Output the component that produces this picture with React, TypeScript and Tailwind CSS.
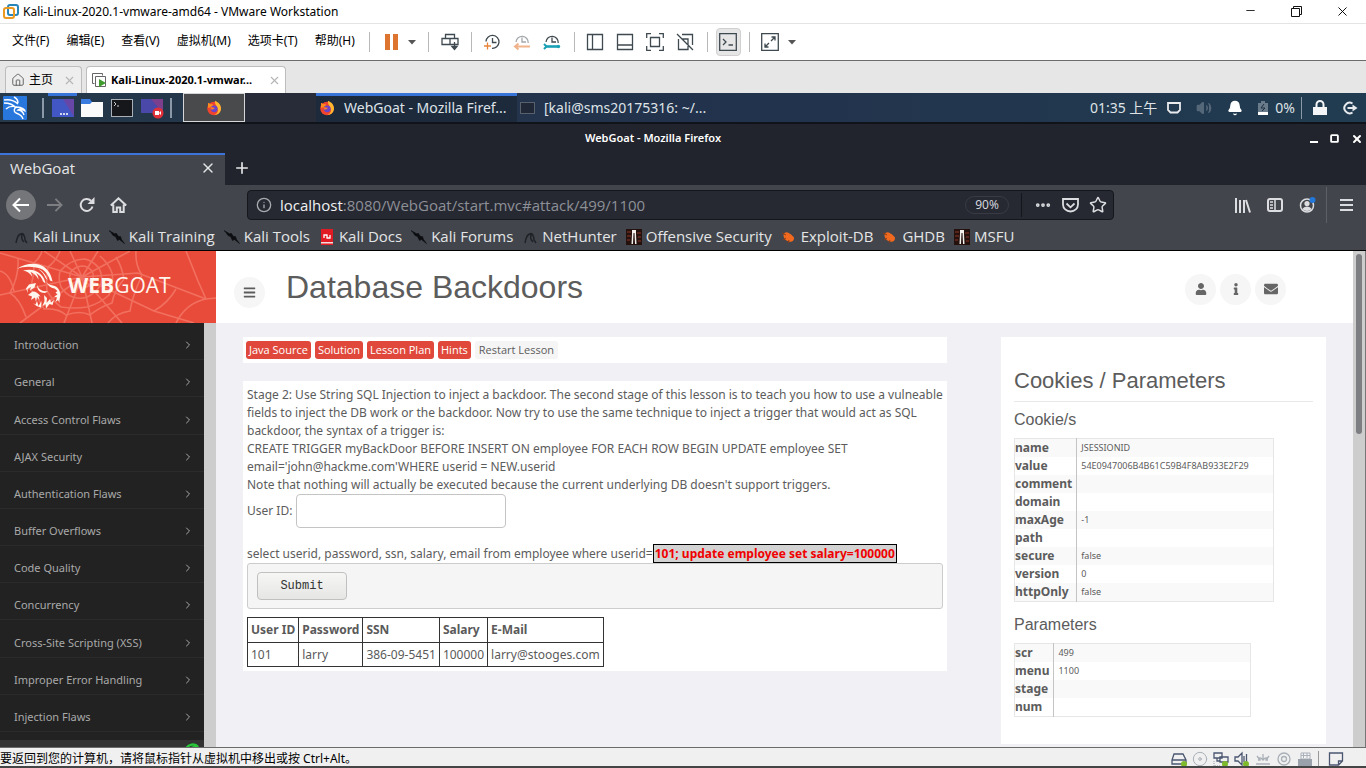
import React, { useState } from "react";
import {
  Bell,
  ChevronRight,
  Disc,
  Home,
  Info,
  Minus,
  MoreHorizontal,
  Plus,
  Square,
  Star,
  Volume2,
  X,
} from "lucide-react";
import { FaBars, FaEnvelope, FaInfo, FaUser } from "react-icons/fa";

interface LessonRow {
  name: string;
  value: string;
}

const menus = ["文件(F)", "编辑(E)", "查看(V)", "虚拟机(M)", "选项卡(T)", "帮助(H)"];

const bookmarks = [
  { label: "Kali Linux", icon: "dragon" },
  { label: "Kali Training", icon: "blade" },
  { label: "Kali Tools", icon: "blade" },
  { label: "Kali Docs", icon: "docs" },
  { label: "Kali Forums", icon: "blade" },
  { label: "NetHunter", icon: "dragon" },
  { label: "Offensive Security", icon: "tower" },
  { label: "Exploit-DB", icon: "bug" },
  { label: "GHDB", icon: "bug" },
  { label: "MSFU", icon: "tower" },
];

const lessons = [
  "Introduction",
  "General",
  "Access Control Flaws",
  "AJAX Security",
  "Authentication Flaws",
  "Buffer Overflows",
  "Code Quality",
  "Concurrency",
  "Cross-Site Scripting (XSS)",
  "Improper Error Handling",
  "Injection Flaws",
];

const cookies: LessonRow[] = [
  { name: "name", value: "JSESSIONID" },
  { name: "value", value: "54E0947006B4B61C59B4F8AB933E2F29" },
  { name: "comment", value: "" },
  { name: "domain", value: "" },
  { name: "maxAge", value: "-1" },
  { name: "path", value: "" },
  { name: "secure", value: "false" },
  { name: "version", value: "0" },
  { name: "httpOnly", value: "false" },
];

const parameters: LessonRow[] = [
  { name: "scr", value: "499" },
  { name: "menu", value: "1100" },
  { name: "stage", value: "" },
  { name: "num", value: "" },
];

const Divider = () => <span className="h-5 w-px shrink-0 bg-[#b8b8b8]" />;

const Caret = () => (
  <svg width="8" height="5" viewBox="0 0 8 5" className="shrink-0">
    <path d="M0 0h8L4 4.5z" fill="#555" />
  </svg>
);

const FirefoxIcon = () => (
  <svg width="16" height="16" viewBox="0 0 16 16" className="shrink-0">
    <circle cx="8" cy="8.5" r="6.8" fill="#f0442e" />
    <path d="M9 .8c3.8 1.6 6.3 4.6 6 8.2-.4 3.6-3 5.8-6.5 5.8 3-1 4-3.6 3.2-6C11 6 8.5 4.5 9 .8z" fill="#ffb52e" />
    <path d="M2 3c.9.1 1.7.5 2.3 1.2 1.2-.3 2.300 0 3 .8L5 7l-3 1z" fill="#ff8a1f" />
    <circle cx="8.2" cy="8.8" r="3.4" fill="#6a45c9" />
    <path d="M4.5 7.5c1.5-.7 3-.2 4.3.5-.8 1.3-2.200 1.6-3.6 1.5z" fill="#ff7a22" />
  </svg>
);

const ToolIcon = ({ name }: { name: string }) => {
  const line = { fill: "none", stroke: "#3f4a50", strokeWidth: 1.3 };
  return (
    <svg width="18" height="18" viewBox="0 0 18 18" className="shrink-0">
      {name === "send" && (
        <g {...line}>
          <path d="M4.5 5.500V1.500h9v4M1 5.500h16v6H1zM9 5.500v6" />
          <path d="M13.500 9v7M11 13.500l2.500 3 2.500-3z" fill="#3f4a50" />
        </g>
      )}
      {name === "snapshot" && (
        <g {...line}>
          <path d="M3 8.500a6.500 6.500 0 1 1 6 6.900M9.500 5v4.500h4" />
          <path d="M1 13h7M4.500 9.500v7" stroke="#e8853b" />
        </g>
      )}
      {name === "revert" && (
        <g {...line} stroke="#a3a8ab">
          <path d="M3 9a6 6 0 1 1 12.200 1M9 4.500V9h4" />
          <path d="M3 13.500h14M5.500 10.500l-3.500 3 3.500 3" stroke="#f0b48c" strokeWidth="2" />
        </g>
      )}
      {name === "manage" && (
        <g {...line}>
          <path d="M3 9a6 6 0 1 1 12.200 1M9 4.500V9h4" />
          <path d="M3 13.500h12.500" stroke="#19a0b5" strokeWidth="2.600" />
          <path d="M1 11l2.500 2.500L1 16" stroke="#19a0b5" strokeWidth="2" />
          <circle cx="15.500" cy="13.500" r="1.700" fill="#19a0b5" stroke="none" />
        </g>
      )}
      {name === "sidebar" && <path {...line} d="M1.500 1.500h15v15h-15zM6.500 1.500v15" />}
      {name === "bottom" && <path {...line} d="M1.500 1.500h15v15h-15zM1.500 12h15" />}
      {name === "fullscreen" && (
        <path {...line} d="M.7 5V.7H5M13 .7h4.300V5M17.300 13v4.300H13M5 17.300H.7V13M4.500 4.500h9v9h-9z" />
      )}
      {name === "unity" && (
        <path {...line} d="M6 1.500h10.500V12M2.500 6v10.500H12V13M6 6h6v6M1 1l16 16" />
      )}
      {name === "console" && (
        <path {...line} d="M.7.7h16.600v16.600H.7zM4 6l3 3-3 3M9.500 12h4.500" />
      )}
      {name === "stretch" && (
        <path {...line} d="M.7.7h16.600v16.600H.7zM10 8l4-4M10.500 4H14v3.500M8 10l-4 4M4 10.500V14h3.500" />
      )}
    </svg>
  );
};

const ToolButton = ({ name, label }: { name: string; label: string }) => (
  <button
    aria-label={label}
    className={
      name === "console"
        ? "mx-2 flex h-7 w-[25px] items-center justify-center rounded-sm border border-[#d0d0d0] bg-[#e6e6e6]"
        : "flex h-7 w-[30px] items-center justify-center"
    }
  >
    <ToolIcon name={name} />
  </button>
);

const BookmarkIcon = ({ name }: { name: string }) => (
  <svg width="16" height="16" viewBox="0 0 16 16" className="shrink-0">
    {name === "dragon" && (
      <path d="M3 14c1-4 1-8 5-9 3 0 4 3 4 6l2 3M5 7c2-3 5-3 6-1M9 6c-1 3 0 5 2 7" fill="none" stroke="#1f2328" strokeWidth="1.500" />
    )}
    {name === "blade" && (
      <path d="M0 1.500l6 3.500 1-1 2.500 3.500h2l1 3 3 4-5-4-2 1-2-4-2.500-1-2-3z" fill="#0b0d10" stroke="#0b0d10" strokeWidth=".6" />
    )}
    {name === "docs" && (
      <g>
        <path d="M2 0h12v16H2z" fill="#e01b24" />
        <path d="M2 13h12v1.500H2z" fill="#f3dede" />
        <path d="M5 9V6h3v3h3V6" fill="none" stroke="#fff" strokeWidth="1.300" />
      </g>
    )}
    {name === "tower" && (
      <g>
        <path d="M0 0h16v16H0z" fill="#24100c" />
        <path d="M1 3h4M1 7h4M1 11h3M11 4h4M12 8h3M12 12h3" stroke="#6a2a1c" strokeWidth="1.500" />
        <path d="M6 1h4v4l.5 10H9L8.500 4h-1L7 15H5.500L6 5z" fill="#f3f0ec" />
      </g>
    )}
    {name === "bug" && (
      <g>
        <path d="M2.500 6c1-3 3-3.500 6-1.500 2 1 3 2 4.500 4 .5 3-2 5-5 4-4-1-5.500-4-5.500-6.500z" fill="#f0691e" />
        <path d="M1 4l4 2M2 11l3-2M7 14l1-3" stroke="#8f3c14" />
      </g>
    )}
  </svg>
);

const WebBackground = () => (
  <svg
    viewBox="0 0 216 72"
    preserveAspectRatio="xMinYMin slice"
    className="absolute inset-0 h-full w-full"
  >
    <g fill="none" stroke="#f2705f" strokeWidth="1.600">
      <path d="M82 26L0 2M82 26L0 44M82 26L20 72M82 26l-18 46M82 26l10 46M82 26l40 46M82 26l72 34 40 12M82 26l56-4 68 26M82 26l48-26M82 26L98 0M82 26L70 0M82 26L44 0" />
      <path d="M70 22q-1 5 1 9 3 5 10 6 7 0 10-5 4-6 1-12-4-5-10-5-8 1-12 7z" />
      <path d="M60 20q-2 8 1 16 5 8 12 10 10 3 16-1 8-4 12-12 2-8-2-16-6-7-14-9-14 0-25 12z" />
      <path d="M48 16q-2 11-1 24 6 10 14 16 14 2 26 0 12-3 22-12 5-12 3-22-3-9-12-17M48 16q8-6 12-16" />
      <path d="M34 12q0 14-4 26 8 8 14 20 14-1 22 6 14-5 24 0 10-8 22-12 2-12 12-24-2-12-8-22M34 12q6-5 8-12" />
      <path d="M18 8q1 18-8 34 10 6 16 24M108 72q8-10 22-12 2-14 12-36-7-10-6-24M154 60q14-8 22-22" />
      <path d="M206 48l-8-18-12-30M206 48l10-1M206 48q-20 4-30 24M0 20q10 3 14 20" />
    </g>
  </svg>
);

const GoatLogo = () => (
  <svg width="46" height="46" viewBox="0 0 46 46" className="shrink-0">
    <g fill="#fff6ee">
      <path d="M0 6C7 1 15 0 22 1.500c7 2 12 8 13.500 17l-2.500-1C31 10 26 5 19 4.500 12 3 5 3.500 0 6z" />
      <path d="M6 7.500c7-2 14-.5 18 4 3 3 4 6 4.500 9l-2.500-2c-1-4-4-7-7-8.500 1.500 2 2.500 4 2.500 6.500-2-4-5-6.500-8-7.500 1 1.500 1.500 3 1.500 4.500C13 10 10 8 6 7.500z" />
      <path d="M21 6c5 2 8 6 9.500 11l-2-2C27 11 24.500 8 21 6z" />
      <path d="M29 18c1 3 4 4 7 4.500 5 1 7 5 7.500 9.500-.5 3-1.500 5-1 8l-1.500-3-2.500 2 1.500-4.500-2.500-1 3-2-2-2 2-1.500-3-2.500c-4-.5-7-3-8.500-7.500z" />
      <path d="M20 22c1 3 3 5 6 6l5 .5-3 1.500c-5 0-8-3-8-8z" />
      <path d="M19 20l-1.500 4.500-4.500 3 1-3.500-3.500 2 .5 4-2-4.500 3-4z" />
      <path d="M11 32l4.500-3.500c4 0 6 2 8 5l-2-.500 1 4-2.500-3-1 5-1-4.500L14 37l1-3.500z" />
      <path d="M16 40l2.500 1.500L20 38l1.500 5 3-5-.5 6.500-4.500-1.500z" />
      <path d="M27 32l3 3-.5 5 3.500-4 1 3.500 3-2.500-1.500 5-3-1-3.500 4.500-.5-4.500-3 2 2-5z" />
    </g>
  </svg>
);

const DataTable = ({ rows, className }: { rows: LessonRow[]; className: string }) => (
  <table className={`border border-[#e6e6e6] ${className}`}>
    <tbody>
      {rows.map((row) => (
        <tr key={row.name} className="h-[18px] odd:bg-[#f9f9f9]">
          <th
            scope="row"
            className="w-px border-r border-[#c4c4c4] pr-1 text-left text-[12px] leading-[18px] font-bold"
          >
            {row.name}
          </th>
          <td className="pl-1 text-[9px] leading-[18px]">{row.value}</td>
        </tr>
      ))}
    </tbody>
  </table>
);

const HostWindow = () => (
  <>
    <header className="flex h-[23px] shrink-0 items-center bg-white px-[3px]">
      <svg width="16" height="16" viewBox="0 0 16 16">
        <rect x="5" y="1" width="10" height="10" rx="2" fill="none" stroke="#2b86b8" strokeWidth="2" />
        <rect x="1" y="4" width="10" height="10" rx="2" fill="none" stroke="#eb9a1f" strokeWidth="2" />
      </svg>
      <h1 className="ml-1 flex-1 text-[12px]">Kali-Linux-2020.1-vmware-amd64 - VMware Workstation</h1>
      <div className="flex gap-7 pr-3">
        <button aria-label="Minimize window" className="flex w-[18px] justify-center">
          <Minus size={13} strokeWidth={1.5} />
        </button>
        <button aria-label="Restore window" className="flex w-[18px] items-center justify-center">
          <svg width="11" height="11" viewBox="0 0 11 11" fill="none" stroke="#111">
            <path d="M.5 2.500h8v8h-8zM2.500 2.500v-2h8v8h-2" />
          </svg>
        </button>
        <button aria-label="Close window" className="flex w-[18px] justify-center">
          <X size={15} strokeWidth={1.5} />
        </button>
      </div>
    </header>
    <div className="flex h-[38px] shrink-0 items-center border-t border-b border-t-[#e4e4e4] border-b-[#6b6b6b] bg-white pl-1">
      <nav className="flex gap-px pr-[6px] pb-[2px] text-[12px]">
        {menus.map((menu) => (
          <button key={menu} className="px-2">
            {menu}
          </button>
        ))}
      </nav>
      <Divider />
      <button aria-label="Pause" className="ml-[15px] flex gap-[3px]">
        <span className="h-4 w-[5px] bg-[#dd7430]" />
        <span className="h-4 w-[5px] bg-[#dd7430]" />
      </button>
      <button aria-label="Power menu" className="mr-3 ml-[10px]">
        <Caret />
      </button>
      <Divider />
      <div className="flex px-[6px]">
        <ToolButton name="send" label="Send Ctrl+Alt+Del" />
      </div>
      <Divider />
      <div className="flex pr-[7px] pl-[5px]">
        <ToolButton name="snapshot" label="Take snapshot" />
        <ToolButton name="revert" label="Revert snapshot" />
        <ToolButton name="manage" label="Manage snapshots" />
      </div>
      <Divider />
      <div className="flex pr-[7px] pl-[5px]">
        <ToolButton name="sidebar" label="Show library" />
        <ToolButton name="bottom" label="Show thumbnails" />
        <ToolButton name="fullscreen" label="Full screen" />
        <ToolButton name="unity" label="Unity" />
      </div>
      <Divider />
      <ToolButton name="console" label="Console view" />
      <Divider />
      <div className="flex items-center gap-[3px] pl-[5px]">
        <ToolButton name="stretch" label="Stretch guest" />
        <Caret />
      </div>
    </div>
    <div className="flex h-8 shrink-0 items-end bg-[#e6e6e6] pl-[5px] text-[12px]">
      <div className="flex h-[27px] w-[77px] items-center rounded-t border border-b-0 border-[#bdbdbd] bg-[#eee] px-[5px]">
        <Home size={14} strokeWidth={1.5} className="text-[#555]" />
        <span className="ml-1 flex-1">主页</span>
        <button aria-label="Close home tab">
          <X size={13} className="text-[#b5b5b5]" />
        </button>
      </div>
      <div className="ml-1 flex h-[27px] w-[200px] items-center rounded-t border border-b-0 border-[#bdbdbd] bg-white px-1">
        <svg width="16" height="16" viewBox="0 0 16 16">
          <path d="M3.500 11.500h-2v-10h10v2M4.500 14.500v-10h10v10z" fill="#fff" stroke="#666" />
          <path d="M8 7l7 4-7 4z" fill="#3e9b2c" />
        </svg>
        <span className="ml-1 flex-1 text-[11px] font-bold">Kali-Linux-2020.1-vmwar...</span>
        <button aria-label="Close machine tab">
          <X size={13} className="text-[#b5b5b5]" />
        </button>
      </div>
    </div>
  </>
);

const KaliPanel = () => (
  <div className="flex h-[31px] shrink-0 items-center border-b-2 border-[#10131a] bg-gradient-to-r from-[#25394a] via-[#22324c] to-[#213c50] text-[14px] text-[#dfe3e8]">
    <button aria-label="Applications" className="ml-[3px] flex">
      <svg width="24" height="24" viewBox="0 0 24 24">
        <rect width="24" height="24" rx="1" fill="#2777dd" />
        <path d="M1 4c6-1 10 0 14 4M1 7c6 0 9 1 12 5M3 13c3-3 7-3 11-2 5 0 8 3 8 4-3-2-6-2-7-1 3 0 5 2 6 5M14 11c-3 1-4 4-1 6 3 1 6 2 7 6M11 1c2 1 4 3 4 6" fill="none" stroke="#fff" strokeWidth="1.400" />
      </svg>
    </button>
    <span className="ml-[15px] h-5 w-[2px] bg-[#8b98a8]" />
    <div className="ml-1 flex h-full">
      <button aria-label="Show desktop" className="flex w-[29px] items-center justify-center shadow-[inset_0_3px_0_#3874d8]">
        <svg width="22" height="18" viewBox="0 0 22 18">
          <rect width="22" height="18" fill="#4357c4" />
          <path d="M11 0h11v18z" fill="#6647a8" />
          <path d="M8 15h2M11 15h2M14 15h2" stroke="#fff" strokeWidth="1.500" />
        </svg>
      </button>
      <button aria-label="Files" className="flex w-[30px] items-center justify-center">
        <svg width="22" height="20" viewBox="0 0 22 20">
          <path d="M0 1h9l2 3h11v4H0z" fill="#3a7be0" />
          <path d="M0 6h9l2-2h11v15H0z" fill="#fbfbfb" />
        </svg>
      </button>
      <button aria-label="Terminal" className="flex w-[30px] items-center justify-center">
        <svg width="22" height="18" viewBox="0 0 22 18">
          <rect x=".5" y=".5" width="21" height="17" fill="#15171a" stroke="#aab0b6" />
          <path d="M3 3l2 2-2 2M6 7h2" fill="none" stroke="#ccc" />
        </svg>
      </button>
      <button aria-label="Recorder" className="flex w-[31px] items-center justify-center">
        <svg width="24" height="22" viewBox="0 0 24 22">
          <rect y="2" width="22" height="14" fill="#4a48a8" />
          <path d="M10 2h12v14z" fill="#7c3f8d" />
          <circle cx="17" cy="16" r="5.500" fill="#e0303a" />
          <path d="M14 14h4v4h-4zM18 16l2-2v4z" fill="#fff" />
        </svg>
      </button>
    </div>
    <span className="ml-[2px] h-5 w-[2px] bg-[#8b98a8]" />
    <button aria-label="Workspace 1" className="ml-[11px] flex h-[29px] w-[62px] items-center justify-center border border-[#d4d6d8] bg-[#494a4c]">
      <FirefoxIcon />
    </button>
    <span className="h-full w-[71px] bg-[#272c38]" />
    <button className="flex h-full w-[201px] items-center bg-[#1c2a3c] pl-[3px] whitespace-nowrap shadow-[inset_0_3px_0_#3874d8]">
      <FirefoxIcon />
      <span className="ml-[9px]">WebGoat - Mozilla Firef...</span>
    </button>
    <button className="flex items-center pl-[3px] whitespace-nowrap">
      <svg width="15" height="12" viewBox="0 0 15 12">
        <rect x=".5" y=".5" width="14" height="11" fill="#202838" stroke="#58606c" />
      </svg>
      <span className="ml-[9px]">[kali@sms20175316: ~/...</span>
    </button>
    <div className="ml-auto flex items-center pr-2">
      <time>01:35 上午</time>
      <svg width="14" height="12" viewBox="0 0 14 12" className="ml-[10px]">
        <path d="M1 1h12v7l-2.500 2.500h-7L1 8z" fill="none" stroke="#e8eaee" strokeWidth="1.800" />
      </svg>
      <Volume2 size={16} className="ml-[15px] fill-[#55687a] text-[#55687a]" />
      <Bell size={16} className="ml-[15px] fill-white text-white" />
      <svg width="10" height="14" viewBox="0 0 10 14" className="ml-[15px]">
        <path d="M0 2h3V0h4v2h3v12H0z" fill="#697a8a" />
        <path d="M0 11h10v3H0z" fill="#fff" />
        <path d="M6 3L3 7h4L4 10" fill="none" stroke="#1e2e40" />
      </svg>
      <span className="ml-[7px]">0%</span>
      <span className="ml-[6px] h-[22px] w-px bg-[#8b98a8]" />
      <svg width="14" height="16" viewBox="0 0 14 16" className="ml-[11px]">
        <path d="M3.500 7V4.500a3.500 3.500 0 0 1 7 0V7" fill="none" stroke="#f4f5f7" strokeWidth="2" />
        <path d="M0 7h14v8H0z" fill="#f4f5f7" />
      </svg>
      <svg width="16" height="14" viewBox="0 0 16 14" className="ml-[15px]">
        <path d="M10.500 2.500A5.300 5.300 0 1 0 10.500 11.500M5.500 7H12" fill="none" stroke="#e8eaee" strokeWidth="2" />
        <path d="M10.500 3.500L15.500 7l-5 3.500z" fill="#e8eaee" />
      </svg>
    </div>
  </div>
);

const BrowserChrome = () => {
  return (
    <div className="shrink-0 font-['Open_Sans',sans-serif] text-[15px]">
      <div className="flex h-[29px] items-center bg-[#21242c] text-white">
        <h2 className="flex-1 text-center font-['Noto_Sans',sans-serif] text-[11px] font-semibold">
          WebGoat - Mozilla Firefox
        </h2>
        <div className="flex w-[60px] items-center justify-between pr-[3px] pl-1">
          <button aria-label="Minimize" className="flex h-2 items-end">
            <span className="h-[2px] w-2 bg-white" />
          </button>
          <button aria-label="Maximize">
            <Square size={9} strokeWidth={5} />
          </button>
          <button aria-label="Close">
            <X size={12} strokeWidth={4} />
          </button>
        </div>
      </div>
      <div className="flex h-8 bg-[#21242c] text-[#e6e7e9]">
        <div className="flex w-[225px] items-center bg-[#42454b] pr-[9px] pb-[2px] pl-[10px] shadow-[inset_0_2px_0_#3f73dc]">
          <span className="flex-1">WebGoat</span>
          <button aria-label="Close tab">
            <X size={16} />
          </button>
        </div>
        <button aria-label="New tab" className="ml-2 pb-[2px]">
          <Plus size={18} strokeWidth={2.2} />
        </button>
      </div>
      <div className="flex h-10 items-center bg-[#42454b] pr-[13px] pl-[6px] text-[#dcdde0]">
        <button aria-label="Back" className="flex h-[30px] w-[30px] items-center justify-center rounded-full bg-[#74767a] text-white">
          <svg width="18" height="16" viewBox="0 0 18 16" fill="none" stroke="currentColor" strokeWidth="2">
            <path d="M17 8H2M8 1.500L1.500 8 8 14.500" />
          </svg>
        </button>
        <button aria-label="Forward" className="ml-[10px] text-[#7c7e82]">
          <svg width="17" height="16" viewBox="0 0 18 16" fill="none" stroke="currentColor" strokeWidth="2">
            <path d="M1 8h15M10 1.500L16.500 8 10 14.500" />
          </svg>
        </button>
        <button aria-label="Reload" className="ml-4">
          <svg width="16" height="16" viewBox="0 0 16 16">
            <path d="M13.500 9.500A6 6 0 1 1 12 3.800" fill="none" stroke="currentColor" strokeWidth="2" />
            <path d="M15.500 0v7h-7z" fill="currentColor" />
          </svg>
        </button>
        <button aria-label="Home page" className="ml-[15px]">
          <svg width="17" height="16" viewBox="0 0 17 16" fill="none" stroke="currentColor" strokeWidth="2">
            <path d="M.8 8.500L8.500 1.300l7.700 7.200M3.300 7.500V15h3.500v-4.500h3.400V15h3.500V7.500" />
          </svg>
        </button>
        <div className="ml-[120px] flex h-[30px] flex-1 items-center rounded-sm border border-[#15171c] bg-[#262932] pr-[6px] pl-2">
          <Info size={16} className="text-[#a9abb0]" />
          <p className="ml-2 flex-1 text-[#8e9097]">
            <span className="text-[#f1f1f3]">localhost</span>
            :8080/WebGoat/start.mvc#attack/499/1100
          </p>
          <button className="w-11 rounded-full border border-[#383b43] text-[12px] leading-4">90%</button>
          <span className="mx-3 h-6 w-px bg-[#14161b]" />
          <button aria-label="Page actions">
            <MoreHorizontal size={18} strokeWidth={3} />
          </button>
          <button aria-label="Save to Pocket" className="ml-[10px]">
            <svg width="17" height="15" viewBox="0 0 17 15" fill="none" stroke="currentColor" strokeWidth="1.800">
              <path d="M1 1h15v5.500a7.500 7 0 0 1-15 0zM4.500 5.500l4 3.800 4-3.800" />
            </svg>
          </button>
          <button aria-label="Bookmark this page" className="ml-[10px]">
            <Star size={18} />
          </button>
        </div>
        <button aria-label="Library" className="ml-[121px]">
          <svg width="16" height="15" viewBox="0 0 16 15" fill="none" stroke="currentColor" strokeWidth="2">
            <path d="M1 0v15M5 2v13M9 2v13M11 2l4 12.500" />
          </svg>
        </button>
        <button aria-label="Sidebars" className="ml-4">
          <svg width="16" height="14" viewBox="0 0 16 14" fill="none" stroke="currentColor" strokeWidth="2">
            <rect x="1" y="1" width="14" height="12" rx="2" />
            <path d="M8 1v12M3 4h3M3 7h3M3 10h3" strokeWidth="1.500" />
          </svg>
        </button>
        <button aria-label="Account" className="ml-4">
          <svg width="17" height="16" viewBox="0 0 17 16">
            <circle cx="8" cy="8.500" r="6.500" fill="none" stroke="currentColor" strokeWidth="1.500" />
            <circle cx="8" cy="6.500" r="2.600" fill="currentColor" />
            <path d="M3.500 12c1.500-3.500 7.500-3.500 9 0-2 2.500-7 2.500-9 0z" fill="currentColor" />
            <circle cx="13.500" cy="3" r="3" fill="#2277d8" />
          </svg>
        </button>
        <span className="ml-[10px] h-9 w-px bg-[#5d6066]" />
        <button aria-label="Open menu" className="ml-[13px]">
          <svg width="13" height="12" viewBox="0 0 13 12" stroke="currentColor" strokeWidth="2">
            <path d="M0 1h13M0 6h13M0 11h13" />
          </svg>
        </button>
      </div>
      <nav className="flex h-[26px] items-center gap-[9px] border-b border-black bg-[#42454b] pb-[2px] pl-[13px] text-[#e4e5e7]">
        {bookmarks.map((bookmark) => (
          <a key={bookmark.label} href="#" className="flex items-center gap-1 whitespace-nowrap">
            <BookmarkIcon name={bookmark.icon} />
            {bookmark.label}
          </a>
        ))}
      </nav>
    </div>
  );
};

const Sidebar = () => (
  <aside className="flex w-[216px] shrink-0 flex-col">
    <a href="#" className="relative flex h-[72px] shrink-0 items-center overflow-hidden bg-[#e94b3a] pl-[17px]">
      <WebBackground />
      <span className="relative flex items-center gap-[5px] pb-[2px] font-['Open_Sans',sans-serif] text-[21px] text-[#fff6ee]">
        <GoatLogo />
        <span>
          <b>WEB</b>GOAT
        </span>
      </span>
    </a>
    <div className="flex min-h-0 flex-1">
      <div className="flex flex-1 flex-col bg-[#222]">
        <ul className="grid h-[409px] shrink-0 auto-rows-fr text-[11px] text-[#a9a9a9]">
          {lessons.map((lesson) => (
            <li key={lesson} className="flex items-end border-b border-[#2b2b2b]">
              <a href="#" className="flex flex-1 items-center justify-between pr-[10px] pb-[6px] pl-[14px] leading-4">
                {lesson}
                <ChevronRight size={12} />
              </a>
            </li>
          ))}
        </ul>
        <div className="mt-2 flex flex-1 justify-end overflow-hidden bg-[#333] pr-1">
          <svg width="16" height="14" viewBox="0 0 16 14" className="mt-[3px]">
            <path d="M2 6c2-5 9-6 12-2M4 10c0-4 5-7 10-5" fill="none" stroke="#27c93a" strokeWidth="2.500" />
          </svg>
        </div>
      </div>
      <div className="w-3 bg-[#cdcdcd]" />
    </div>
  </aside>
);

const LessonContent = () => {
  const [userId, setUserId] = useState("");
  const actions = ["Java Source", "Solution", "Lesson Plan", "Hints"];

  return (
    <div className="min-w-0 flex-1">
      <div className="flex h-[26px] items-center gap-1 bg-white px-[3px] font-['Open_Sans',sans-serif] text-[11px]">
        {actions.map((action) => (
          <button key={action} className="h-[18px] rounded-[3px] bg-[#e0483b] px-[3px] leading-[18px] text-white">
            {action}
          </button>
        ))}
        <button className="h-[18px] rounded-[3px] bg-[#f5f5f5] px-1 leading-[18px]">Restart Lesson</button>
      </div>
      <div className="mt-[18px] bg-white px-1 pt-[5px] pb-1 text-[12px] leading-[18px]">
        <p>
          Stage 2: Use String SQL Injection to inject a backdoor. The second stage of this lesson is to teach you how
          to use a vulneable fields to inject the DB work or the backdoor. Now try to use the same technique to inject
          a trigger that would act as SQL backdoor, the syntax of a trigger is:
          <br />
          CREATE TRIGGER myBackDoor BEFORE INSERT ON employee FOR EACH ROW BEGIN UPDATE employee SET
          email='john@hackme.com'WHERE userid = NEW.userid
          <br />
          Note that nothing will actually be executed because the current underlying DB doesn't support triggers.
        </p>
        <div className="flex items-center gap-1">
          <label htmlFor="userid">User ID:</label>
          <input
            id="userid"
            type="text"
            value={userId}
            onChange={(e) => setUserId(e.target.value)}
            className="h-[34px] w-[210px] rounded border border-[#c4c4c4] bg-white px-2"
          />
        </div>
        <p className="mt-[17px]">
          select userid, password, ssn, salary, email from employee where userid=
          <b className="border border-black bg-[#d3d3d3] px-px text-[#f00000]">
            101; update employee set salary=100000
          </b>
        </p>
        <div className="rounded-[3px] border border-[#ccc] bg-[#f5f5f5] px-[9px] py-2">
          <button className="block h-7 w-[90px] rounded border border-[#c0c0c0] bg-gradient-to-b from-[#f6f6f4] to-[#e6e6e4] font-['Liberation_Mono',monospace] text-[12px] leading-4 text-[#333]">
            Submit
          </button>
        </div>
        <table className="mt-2 border-collapse text-left text-[#5a5a5a] [&_td]:border [&_td]:border-[#333] [&_td]:px-[3px] [&_th]:border [&_th]:border-[#333] [&_th]:px-[3px]">
          <thead>
            <tr className="h-[25px]">
              <th>User ID</th>
              <th>Password</th>
              <th>SSN</th>
              <th>Salary</th>
              <th>E-Mail</th>
            </tr>
          </thead>
          <tbody>
            <tr className="h-6">
              <td>101</td>
              <td>larry</td>
              <td>386-09-5451</td>
              <td>100000</td>
              <td>larry@stooges.com</td>
            </tr>
          </tbody>
        </table>
      </div>
    </div>
  );
};

const StatusBar = () => {
  const line = { fill: "none", stroke: "#4a5570", strokeWidth: 1.3 };
  const faded = { fill: "none", stroke: "#aab0b8", strokeWidth: 1.3 };
  return (
    <footer className="flex h-[21px] shrink-0 items-center overflow-hidden border-t border-b-2 border-t-[#6b6b6b] border-b-[#454545] bg-[#f0f0f0] pt-1 pr-[22px] text-[12px]">
      <p className="flex-1">要返回到您的计算机，请将鼠标指针从虚拟机中移出或按 Ctrl+Alt。</p>
      <div className="flex items-center gap-[5px]">
        <svg width="16" height="16" viewBox="0 0 16 16">
          <path {...line} d="M3 3h9l3 6v4H1V9zM1 9h14" />
          <circle cx="13" cy="13" r="3" fill="#7fba2c" />
        </svg>
        <Disc size={16} strokeWidth={1.5} className="text-[#aab0b8]" />
        <svg width="16" height="16" viewBox="0 0 16 16">
          <path {...line} d="M1 2h8v5H1zM7 6h8v5H7zM4 7v3h3" />
          <path {...faded} strokeDasharray="1 1" d="M1 10v5h7" />
          <circle cx="12" cy="13" r="3" fill="#7fba2c" />
        </svg>
        <svg width="16" height="16" viewBox="0 0 16 16">
          <path {...line} d="M1 6h3l4-4v12l-4-4H1zM10 5v6M12.500 3v8" />
          <circle cx="12" cy="13" r="3" fill="#7fba2c" />
        </svg>
        <svg width="16" height="16" viewBox="0 0 16 16" {...faded}>
          <path d="M1 13h14M2 5l3 4M14 5l-3 4M8 3v6M5 6v3H3M11 6v3h2M6 7l2 2 2-2" />
        </svg>
        <svg width="16" height="16" viewBox="0 0 16 16" {...faded}>
          <circle cx="8" cy="8" r="6" />
          <circle cx="8" cy="8" r="2.500" />
        </svg>
        <svg width="16" height="16" viewBox="0 0 16 16">
          <path d="M4 2h9v6H4z" fill="#f4f5f6" stroke="#aab0b8" />
          <path d="M6.500 2v5M10 2v5M4 4.500h9" stroke="#aab0b8" />
          <path d="M1 8h14v7H1z" fill="#9aa1aa" />
        </svg>
        <span className="h-4 w-px bg-[#999]" />
        <svg width="16" height="16" viewBox="0 0 16 16" className="ml-1">
          <path {...line} d="M1.500 2h13v8l-4 4h-9zM14.500 10h-4v4" />
        </svg>
      </div>
    </footer>
  );
};

const App = () => {
  return (
    <div className="flex h-screen flex-col overflow-hidden bg-white font-['Noto_Sans','Noto_Sans_CJK_SC',sans-serif] text-black">
      <HostWindow />
      <KaliPanel />
      <BrowserChrome />
      <div className="flex min-h-0 flex-1 overflow-hidden border-r border-[#777] text-[#5c5c5c]">
        <Sidebar />
        <main className="flex min-w-0 flex-1 flex-col bg-[#f0f0f5]">
          <header className="flex h-[72px] shrink-0 items-center bg-white pr-[67px] pl-[18px]">
            <button aria-label="Toggle menu" className="mt-[10px] flex h-[31px] w-[31px] items-center justify-center rounded-full bg-[#f6f6f6]">
              <FaBars size={13} />
            </button>
            <h1 className="ml-[21px] flex-1 font-['Liberation_Sans',sans-serif] text-[32px] leading-9">
              Database Backdoors
            </h1>
            <div className="mt-1 flex gap-1 text-[#666]">
              <button aria-label="User" className="flex h-[31px] w-[31px] items-center justify-center rounded-full bg-[#f6f6f6]">
                <FaUser size={12} />
              </button>
              <button aria-label="About" className="flex h-[31px] w-[31px] items-center justify-center rounded-full bg-[#f6f6f6]">
                <FaInfo size={12} />
              </button>
              <button aria-label="Contact" className="flex h-[31px] w-[31px] items-center justify-center rounded-full bg-[#f6f6f6]">
                <FaEnvelope size={14} />
              </button>
            </div>
          </header>
          <div className="flex min-h-0 flex-1 items-start gap-[54px] px-[27px] pt-[14px]">
            <LessonContent />
            <section className="w-[325px] shrink-0 bg-white px-[13px] pt-[30px] pb-[27px]">
              <h2 className="border-b border-[#e8e8e8] pb-[6px] font-['Liberation_Sans',sans-serif] text-[22px] leading-7">
                Cookies / Parameters
              </h2>
              <h3 className="mt-2 mb-2 font-['Liberation_Sans',sans-serif] text-[16px] leading-5">Cookie/s</h3>
              <DataTable rows={cookies} className="w-[260px]" />
              <h3 className="mt-[13px] mb-2 font-['Liberation_Sans',sans-serif] text-[16px] leading-5">
                Parameters
              </h3>
              <DataTable rows={parameters} className="w-[237px]" />
            </section>
          </div>
        </main>
        <div className="w-3 shrink-0 bg-[#cdcdcd] px-[3px] pt-[3px]">
          <div className="h-[180px] rounded-full bg-[#7d7e82]" />
        </div>
      </div>
      <StatusBar />
    </div>
  );
};

export default App;
